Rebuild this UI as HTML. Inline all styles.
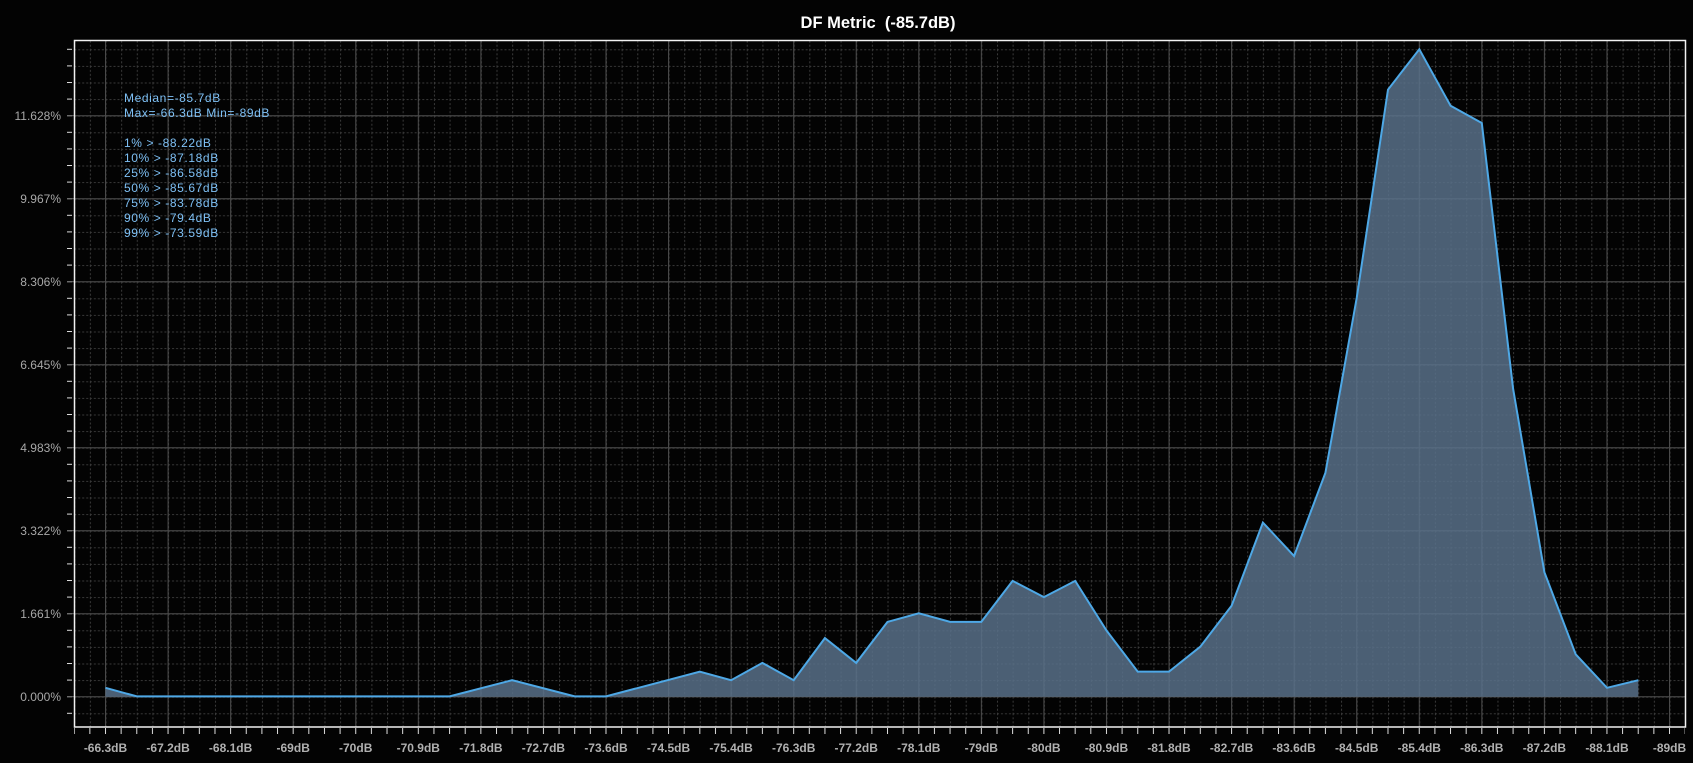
<!DOCTYPE html>
<html><head><meta charset="utf-8"><style>
html,body{margin:0;padding:0;background:#030303;width:1693px;height:763px;overflow:hidden}
svg{display:block}
</style></head><body>
<svg width="1693" height="763" xmlns="http://www.w3.org/2000/svg">
<defs>
<pattern id="minor" patternUnits="userSpaceOnUse" x="105.5" y="696.7" width="15.64" height="16.6">
<line x1="0.5" y1="0" x2="0.5" y2="16.6" stroke="#3a3a3a" stroke-width="1" stroke-dasharray="2,2"/>
<line x1="0" y1="0.5" x2="15.64" y2="0.5" stroke="#3a3a3a" stroke-width="1" stroke-dasharray="2,2"/>
</pattern>
<pattern id="major" patternUnits="userSpaceOnUse" x="105" y="696.2" width="62.56" height="83">
<line x1="0.5" y1="0" x2="0.5" y2="83" stroke="#4a4a4a" stroke-width="1.2"/>
<line x1="0" y1="0.5" x2="62.56" y2="0.5" stroke="#4a4a4a" stroke-width="1.2"/>
</pattern>
<pattern id="lt" patternUnits="userSpaceOnUse" x="0" y="696.2" width="8" height="16.6">
<line x1="3" y1="0.5" x2="8" y2="0.5" stroke="#ddd" stroke-width="1"/>
</pattern>
<pattern id="bt" patternUnits="userSpaceOnUse" x="105" y="0" width="15.64" height="8">
<line x1="0.5" y1="0" x2="0.5" y2="6" stroke="#ddd" stroke-width="1"/>
</pattern>
</defs>
<rect x="74" y="40" width="1611" height="687" fill="url(#minor)"/>
<rect x="74" y="40" width="1611" height="687" fill="url(#major)"/>
<rect x="66" y="41" width="8" height="686" fill="url(#lt)"/>
<rect x="74" y="727" width="1611" height="8" fill="url(#bt)"/>
<g stroke="#666" stroke-width="1">
<line x1="67" y1="696.7" x2="74" y2="696.7"/><line x1="67" y1="613.7" x2="74" y2="613.7"/><line x1="67" y1="530.7" x2="74" y2="530.7"/><line x1="67" y1="447.7" x2="74" y2="447.7"/><line x1="67" y1="364.7" x2="74" y2="364.7"/><line x1="67" y1="281.7" x2="74" y2="281.7"/><line x1="67" y1="198.7" x2="74" y2="198.7"/><line x1="67" y1="115.7" x2="74" y2="115.7"/>
</g>
<polygon fill="#587088" fill-opacity="0.85" points="105.5,696.7 105.5,687.8 136.8,696.4 449.6,696.4 512.1,680.2 574.7,696.4 606,696.4 699.8,671.6 731.1,680.2 762.4,662.9 793.7,680.2 824.9,638.1 856.2,662.9 887.5,621.9 918.8,613.3 950.1,621.9 981.3,621.9 1012.6,580.9 1043.9,597.1 1075.2,580.9 1106.5,630.5 1137.7,671.6 1169,671.6 1200.3,646.7 1231.6,605.7 1262.9,522.6 1294.1,556 1325.4,472.9 1356.7,298 1388,89.6 1419.3,49.3 1450.6,105.8 1481.8,123 1513.1,388.7 1544.4,572.2 1575.7,654.3 1607,687.8 1638.3,680.2 1638.3,696.7"/>
<polyline fill="none" stroke="#4ea8e6" stroke-width="2" stroke-linejoin="miter" points="105.5,687.8 136.8,696.4 449.6,696.4 512.1,680.2 574.7,696.4 606,696.4 699.8,671.6 731.1,680.2 762.4,662.9 793.7,680.2 824.9,638.1 856.2,662.9 887.5,621.9 918.8,613.3 950.1,621.9 981.3,621.9 1012.6,580.9 1043.9,597.1 1075.2,580.9 1106.5,630.5 1137.7,671.6 1169,671.6 1200.3,646.7 1231.6,605.7 1262.9,522.6 1294.1,556 1325.4,472.9 1356.7,298 1388,89.6 1419.3,49.3 1450.6,105.8 1481.8,123 1513.1,388.7 1544.4,572.2 1575.7,654.3 1607,687.8 1638.3,680.2"/>
<rect x="74.5" y="40.5" width="1611" height="686.5" fill="none" stroke="#f2f2f2" stroke-width="1.5"/>
<text x="878" y="28" fill="#fff" font-family="Liberation Sans, sans-serif" font-size="16.5" font-weight="bold" text-anchor="middle">DF Metric &#160;(-85.7dB)</text>
<g fill="#a8a8a8" font-family="Liberation Sans, sans-serif" font-size="12" text-anchor="end">
<text x="61" y="701">0.000%</text><text x="61" y="618">1.661%</text><text x="61" y="535">3.322%</text><text x="61" y="452">4.983%</text><text x="61" y="369">6.645%</text><text x="61" y="286">8.306%</text><text x="61" y="203">9.967%</text><text x="61" y="120">11.628%</text>
</g>
<g fill="#b0b0b0" font-family="Liberation Sans, sans-serif" font-size="12" font-weight="bold" text-anchor="middle">
<text x="105.5" y="752">-66.3dB</text><text x="168.1" y="752">-67.2dB</text><text x="230.6" y="752">-68.1dB</text><text x="293.2" y="752">-69dB</text><text x="355.7" y="752">-70dB</text><text x="418.3" y="752">-70.9dB</text><text x="480.9" y="752">-71.8dB</text><text x="543.4" y="752">-72.7dB</text><text x="606" y="752">-73.6dB</text><text x="668.5" y="752">-74.5dB</text><text x="731.1" y="752">-75.4dB</text><text x="793.7" y="752">-76.3dB</text><text x="856.2" y="752">-77.2dB</text><text x="918.8" y="752">-78.1dB</text><text x="981.3" y="752">-79dB</text><text x="1043.9" y="752">-80dB</text><text x="1106.5" y="752">-80.9dB</text><text x="1169" y="752">-81.8dB</text><text x="1231.6" y="752">-82.7dB</text><text x="1294.1" y="752">-83.6dB</text><text x="1356.7" y="752">-84.5dB</text><text x="1419.3" y="752">-85.4dB</text><text x="1481.8" y="752">-86.3dB</text><text x="1544.4" y="752">-87.2dB</text><text x="1607" y="752">-88.1dB</text><text x="1669.5" y="752">-89dB</text>
</g>
<g fill="#7ec0f5" font-family="Liberation Sans, sans-serif" font-size="12" letter-spacing="0.6">
<text x="124" y="102">Median=-85.7dB</text>
<text x="124" y="117">Max=-66.3dB Min=-89dB</text>
<text x="124" y="147">1% &gt; -88.22dB</text>
<text x="124" y="162">10% &gt; -87.18dB</text>
<text x="124" y="177">25% &gt; -86.58dB</text>
<text x="124" y="192">50% &gt; -85.67dB</text>
<text x="124" y="207">75% &gt; -83.78dB</text>
<text x="124" y="222">90% &gt; -79.4dB</text>
<text x="124" y="237">99% &gt; -73.59dB</text>
</g>
</svg>
</body></html>
